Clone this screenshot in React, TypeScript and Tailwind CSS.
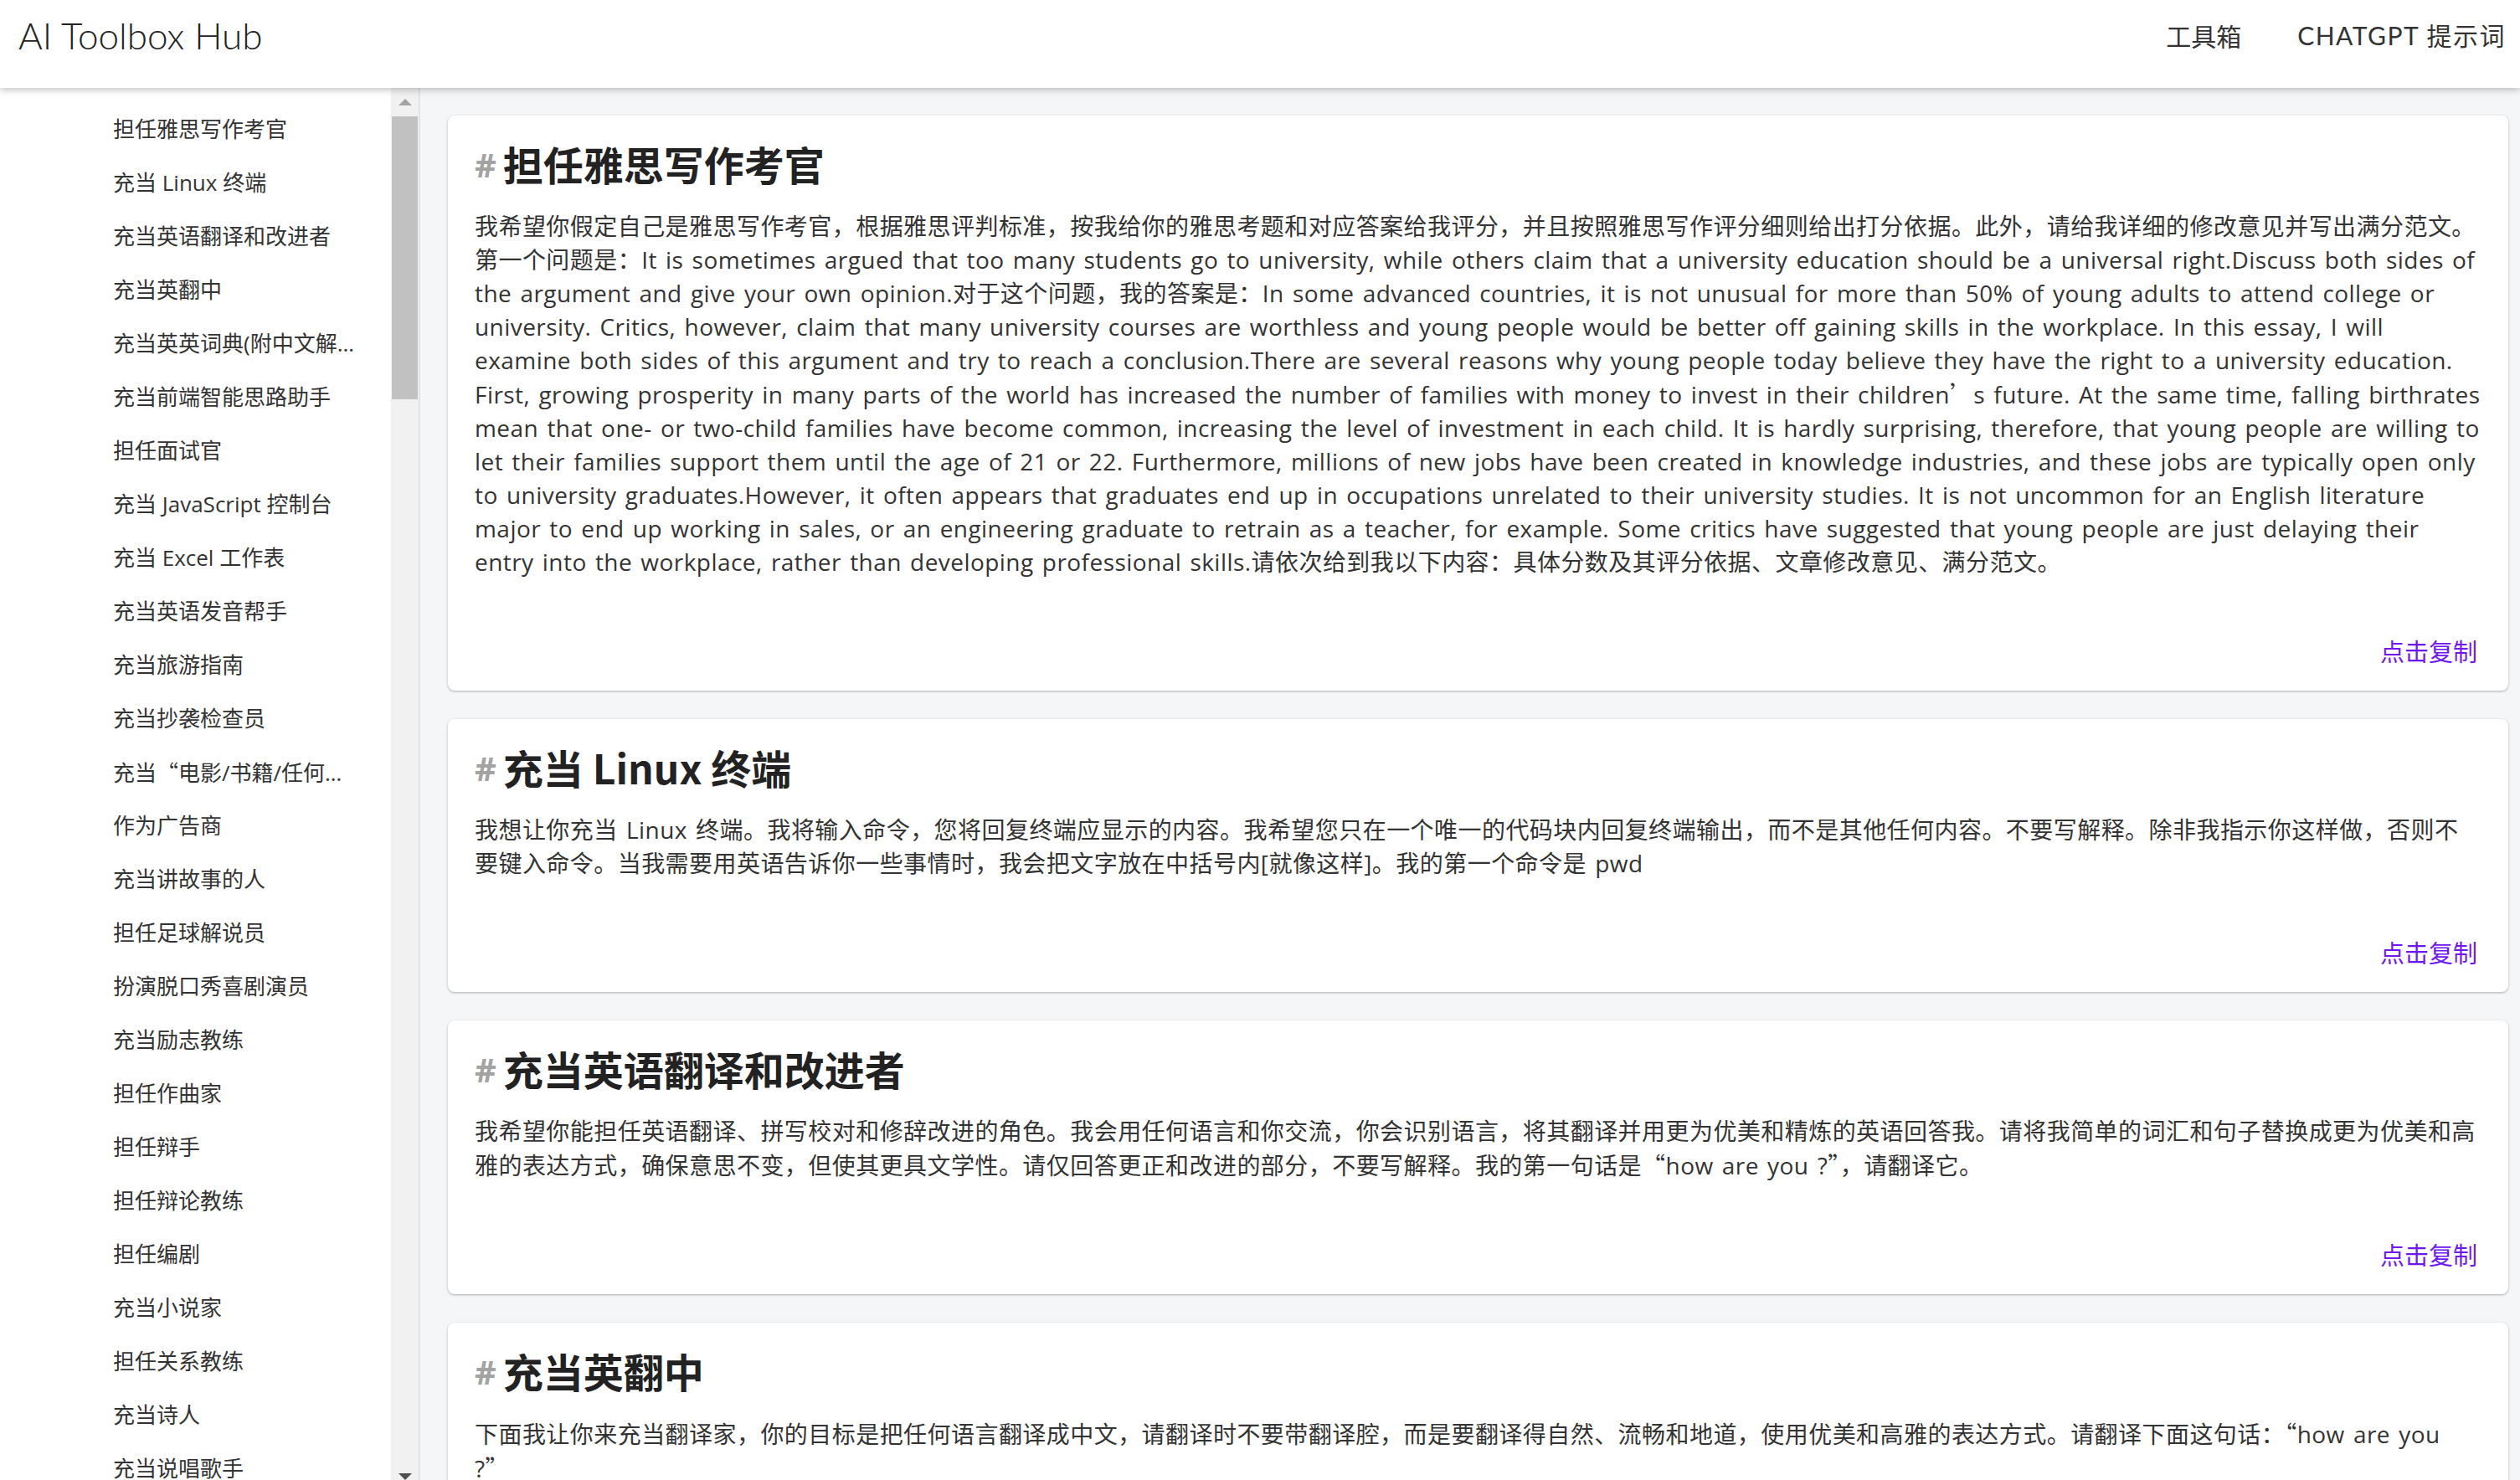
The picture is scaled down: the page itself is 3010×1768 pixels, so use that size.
import React from "react";

const sans = { fontFamily: '"Open Sans", "Noto Sans CJK SC", sans-serif' };
const cjk = { fontFamily: '"Noto Sans CJK SC", sans-serif' };
const lato = { fontFamily: 'Lato, "Noto Sans CJK SC", sans-serif' };

// Chinese pages render curly quotes with the CJK font (full width)
function Txt({ text }: { text: string }) {
  const parts = text.split(/([“”’])/);
  return (
    <>
      {parts.map((p, i) =>
        /^[“”’]$/.test(p) ? (
          <span key={i} style={cjk}>
            {p}
          </span>
        ) : (
          <React.Fragment key={i}>{p}</React.Fragment>
        )
      )}
    </>
  );
}

const menu = [
  "担任雅思写作考官",
  "充当 Linux 终端",
  "充当英语翻译和改进者",
  "充当英翻中",
  "充当英英词典(附中文解释)",
  "充当前端智能思路助手",
  "担任面试官",
  "充当 JavaScript 控制台",
  "充当 Excel 工作表",
  "充当英语发音帮手",
  "充当旅游指南",
  "充当抄袭检查员",
  "充当“电影/书籍/任何东西”中的角色",
  "作为广告商",
  "充当讲故事的人",
  "担任足球解说员",
  "扮演脱口秀喜剧演员",
  "充当励志教练",
  "担任作曲家",
  "担任辩手",
  "担任辩论教练",
  "担任编剧",
  "充当小说家",
  "担任关系教练",
  "充当诗人",
  "充当说唱歌手",
];

const prompts = [
  {
    title: "担任雅思写作考官",
    body: "我希望你假定自己是雅思写作考官，根据雅思评判标准，按我给你的雅思考题和对应答案给我评分，并且按照雅思写作评分细则给出打分依据。此外，请给我详细的修改意见并写出满分范文。第一个问题是：It is sometimes argued that too many students go to university, while others claim that a university education should be a universal right.Discuss both sides of the argument and give your own opinion.对于这个问题，我的答案是：In some advanced countries, it is not unusual for more than 50% of young adults to attend college or university. Critics, however, claim that many university courses are worthless and young people would be better off gaining skills in the workplace. In this essay, I will examine both sides of this argument and try to reach a conclusion.There are several reasons why young people today believe they have the right to a university education. First, growing prosperity in many parts of the world has increased the number of families with money to invest in their children’s future. At the same time, falling birthrates mean that one- or two-child families have become common, increasing the level of investment in each child. It is hardly surprising, therefore, that young people are willing to let their families support them until the age of 21 or 22. Furthermore, millions of new jobs have been created in knowledge industries, and these jobs are typically open only to university graduates.However, it often appears that graduates end up in occupations unrelated to their university studies. It is not uncommon for an English literature major to end up working in sales, or an engineering graduate to retrain as a teacher, for example. Some critics have suggested that young people are just delaying their entry into the workplace, rather than developing professional skills.请依次给到我以下内容：具体分数及其评分依据、文章修改意见、满分范文。",
  },
  {
    title: "充当 Linux 终端",
    body: "我想让你充当 Linux 终端。我将输入命令，您将回复终端应显示的内容。我希望您只在一个唯一的代码块内回复终端输出，而不是其他任何内容。不要写解释。除非我指示你这样做，否则不要键入命令。当我需要用英语告诉你一些事情时，我会把文字放在中括号内[就像这样]。我的第一个命令是 pwd",
  },
  {
    title: "充当英语翻译和改进者",
    body: "我希望你能担任英语翻译、拼写校对和修辞改进的角色。我会用任何语言和你交流，你会识别语言，将其翻译并用更为优美和精炼的英语回答我。请将我简单的词汇和句子替换成更为优美和高雅的表达方式，确保意思不变，但使其更具文学性。请仅回答更正和改进的部分，不要写解释。我的第一句话是“how are you ?”，请翻译它。",
  },
  {
    title: "充当英翻中",
    body: "下面我让你来充当翻译家，你的目标是把任何语言翻译成中文，请翻译时不要带翻译腔，而是要翻译得自然、流畅和地道，使用优美和高雅的表达方式。请翻译下面这句话：“how are you ?”",
  },
];

function PromptCard({ title, body }: { title: string; body: string }) {
  return (
    <div className="shrink-0 bg-white rounded-[8px] shadow-[0_1px_3px_rgba(0,0,0,0.3)] pt-[26px] px-[32px] pb-[28px]">
      <h2 className="flex items-center h-[62px] text-[#222]">
        <span className="text-[40px] font-bold text-[#a3a3a3] mr-[8px] mt-[4px]">#</span>
        <span className="text-[48px] font-bold leading-[62px]" style={cjk}>
          {title}
        </span>
      </h2>
      <p className="mt-[24px] text-[28px] leading-[40px] tracking-[0.45px] [word-spacing:2.5px] text-[#333]">
        <Txt text={body} />
      </p>
      <div className="mt-[66px] flex justify-end pr-[5px]">
        <button className="text-[29px] leading-[40px] text-[#7016f5]" style={cjk}>
          点击复制
        </button>
      </div>
    </div>
  );
}

export default function App() {
  return (
    <div className="h-screen flex flex-col overflow-hidden bg-white" style={sans}>
      <header className="relative z-10 h-[105px] shrink-0 bg-white shadow-[0_3px_8px_rgba(0,0,0,0.22)]">
        <div className="h-[84px] flex items-center justify-between pl-[22px] pr-[17px]">
          <h1 className="text-[44px] font-light text-[#222]" style={lato}>
            AI Toolbox Hub
          </h1>
          <nav className="flex items-center gap-[67px] text-[30px] text-[#333]">
            <a style={cjk}>工具箱</a>
            <a className="tracking-[1.5px]" style={lato}>
              CHATGPT 提示词
            </a>
          </nav>
        </div>
      </header>

      <div className="flex flex-1 min-h-0">
        <aside className="w-[502px] shrink-0 flex border-r-2 border-[#e3e3e3] bg-white">
          <ul className="flex-1 overflow-hidden pt-[17px] pl-[135px]">
            {menu.map((m) => (
              <li key={m} className="h-[64px] flex items-center text-[26px] text-[#333]">
                <span className="w-[292px] truncate">
                  <Txt text={m} />
                </span>
              </li>
            ))}
          </ul>
          <div className="w-[33px] shrink-0 bg-[#f1f1f1] flex flex-col">
            <div className="h-[34px] flex items-center justify-center">
              <div className="w-0 h-0 border-l-[8px] border-r-[8px] border-b-[8px] border-l-transparent border-r-transparent border-b-[#a3a3a3]" />
            </div>
            <div className="h-[338px] mx-[1px] bg-[#c1c1c1]" />
            <div className="flex-1" />
            <div className="h-[20px] flex items-end justify-center">
              <div className="w-0 h-0 border-l-[8px] border-r-[8px] border-t-[8px] border-l-transparent border-r-transparent border-t-[#505050]" />
            </div>
          </div>
        </aside>

        <main className="flex-1 min-w-0 bg-[#f5f6f8] overflow-hidden pl-[33px] pr-[14px] pt-[33px] flex flex-col gap-[34px]">
          {prompts.map((p) => (
            <PromptCard key={p.title} title={p.title} body={p.body} />
          ))}
        </main>
      </div>
    </div>
  );
}
